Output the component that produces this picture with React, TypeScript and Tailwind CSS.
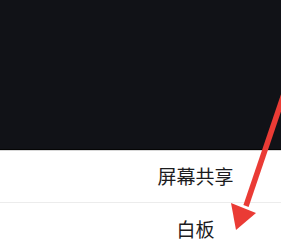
export default function App() {
  const items = ["屏幕共享", "白板"];

  return (
    <div className="relative h-[246px] w-[281px] overflow-hidden bg-white font-['Noto_Sans_CJK_SC',sans-serif]">
      {/* video area */}
      <div className="h-[149px] w-full bg-[#111217]" />
      <div className="h-px w-full bg-[#050505]" />
      <div className="h-px w-full bg-[#d8d8d8]" />

      {/* action sheet */}
      <div className="flex flex-col">
        {items.map((item, i) => (
          <div
            key={item}
            className={
              "flex h-[52px] items-center justify-center pl-[110px] text-[19px] text-[#1c1c1e] " +
              (i === 0 ? "border-b border-[#ececec]" : "")
            }
          >
            {item}
          </div>
        ))}
      </div>

      {/* annotation arrow */}
      <svg className="absolute left-0 top-0 h-[246px] w-[281px]" viewBox="0 0 281 246">
        <line x1="284" y1="94" x2="246" y2="206" stroke="#ea3b35" strokeWidth="5.5" />
        <polygon points="236,230 231,203 256,213" fill="#ea3b35" />
      </svg>
    </div>
  );
}
